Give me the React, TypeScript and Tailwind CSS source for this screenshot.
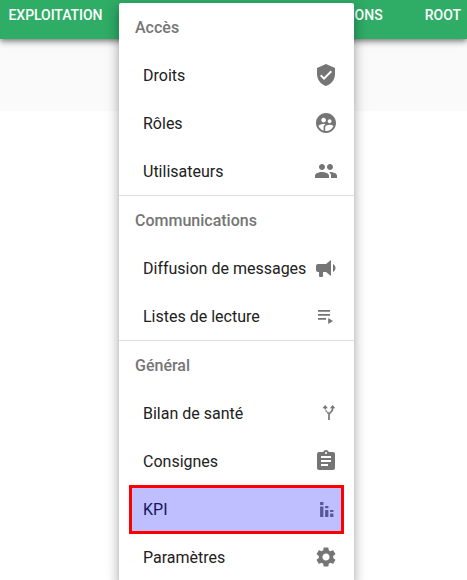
import type { ReactNode } from "react";
import { MdSupervisedUserCircle, MdPeople, MdAssignment, MdSettings, MdVerifiedUser } from "react-icons/md";

type Item = { label: string; icon: ReactNode; selected?: boolean };
type Section = { title: string; items: Item[] };

const Glyph = ({ children }: { children: ReactNode }) => (
  <svg viewBox="0 0 24 24" width="24" height="24" fill="currentColor">{children}</svg>
);

const sections: Section[] = [
  {
    title: "Accès",
    items: [
      { label: "Droits", icon: <MdVerifiedUser size={24} /> },
      { label: "Rôles", icon: <MdSupervisedUserCircle size={24} /> },
      { label: "Utilisateurs", icon: <MdPeople size={24} /> },
    ],
  },
  {
    title: "Communications",
    items: [
      {
        label: "Diffusion de messages",
        icon: (
          <Glyph>
            <path d="M12,8H4A2,2 0 0,0 2,10V14A2,2 0 0,0 4,16H5V20A1,1 0 0,0 6,21H8A1,1 0 0,0 9,20V16H12L17,20V4L12,8M21.5,12C21.5,13.71 20.54,15.26 19,16V8C20.53,8.75 21.5,10.3 21.5,12Z" />
          </Glyph>
        ),
      },
      {
        label: "Listes de lecture",
        icon: (
          <Glyph>
            <path d="M4 6h12.1v1.8H4zM4 10h12.1v1.8H4zM4 14h8.1v1.8H4zM14.2 14.1v5.8l4.8-2.9z" />
          </Glyph>
        ),
      },
    ],
  },
  {
    title: "Général",
    items: [
      {
        label: "Bilan de santé",
        icon: (
          <Glyph>
            <path d="M8.5 7.2 11.2 4 13.9 7.2zM15.9 7.2 18.6 4 21.3 7.2z" />
            <path d="M18.6 6.5v1.2c0 3.6-3.6 3.1-3.6 6.3V19" fill="none" stroke="currentColor" strokeWidth="1.7" />
            <path d="M11.3 6.8v1.6M11.8 9.4l.8 1.3M13.2 11.2l1.5 1.4" fill="none" stroke="currentColor" strokeWidth="1.6" />
          </Glyph>
        ),
      },
      { label: "Consignes", icon: <MdAssignment size={24} /> },
      {
        label: "KPI",
        selected: true,
        icon: (
          <Glyph>
            <path d="M6.1 5h3.3v3H6.1zM6.1 9.4h3.3V20H6.1zM11.1 9h3.3v2.2h-3.3zM11.1 13h3.3v7h-3.3zM16.1 13h3.3v2h-3.3zM16.1 16.6h3.3V20h-3.3z" />
          </Glyph>
        ),
      },
      { label: "Paramètres", icon: <MdSettings size={24} /> },
    ],
  },
];

export default function App() {
  return (
    <div className="relative h-[580px] w-[467px] overflow-hidden bg-white font-['Roboto',sans-serif]">
      <header className="relative z-10 flex h-[39px] justify-between bg-[#2fac66] pr-[6px] pl-[8.5px] text-sm leading-[30px] font-medium text-white shadow-[0_2px_4px_-1px_rgba(0,0,0,0.3),0_4px_5px_rgba(0,0,0,0.2),0_1px_10px_rgba(0,0,0,0.14)]">
        <span className="tracking-[-0.06px]">EXPLOITATION</span>
        <div className="flex gap-[42px]">
          <span>CONFIGURATIONS</span>
          <span>ROOT</span>
        </div>
      </header>
      <div className="h-[72px] bg-[#fafafa]" />
      <nav className="absolute top-[3px] left-[119px] z-20 w-[235px] rounded-t-[2px] bg-white shadow-[0_5px_5px_-3px_rgba(0,0,0,0.2),0_8px_10px_1px_rgba(0,0,0,0.16),0_3px_14px_2px_rgba(0,0,0,0.15)]">
        {sections.map((section, index) => (
          <section key={section.title} className={index > 0 ? "border-t border-[#e0e0e0]" : ""}>
            <h2 className="flex h-12 items-center px-4 pt-0.5 text-base font-medium text-[#757575]">{section.title}</h2>
            {section.items.map((item) => (
              <div key={item.label} className="relative flex h-12 items-center justify-between pr-4 pl-6 text-base whitespace-nowrap text-[#212121]">
                <span className="pt-0.5">{item.label}</span>
                <span className="shrink-0 text-[#757575]">{item.icon}</span>
                {item.selected && (
                  <div className="absolute top-0 left-[10px] h-[49px] w-[215px] border-3 border-[#ff0000] bg-[#0000ff]/25" />
                )}
              </div>
            ))}
          </section>
        ))}
      </nav>
    </div>
  );
}
